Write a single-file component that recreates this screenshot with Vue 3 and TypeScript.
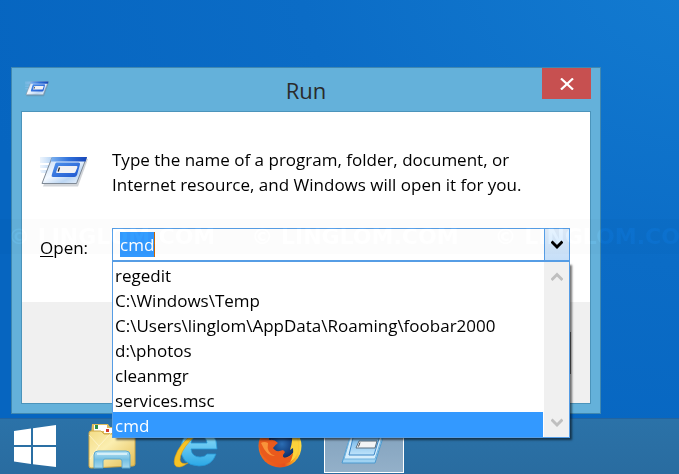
<script setup lang="ts">
import { ref } from 'vue'

const command = ref<string>('cmd')
const history: string[] = [
  'regedit',
  'C:\\Windows\\Temp',
  'C:\\Users\\linglom\\AppData\\Roaming\\foobar2000',
  'd:\\photos',
  'cleanmgr',
  'services.msc',
  'cmd',
]
const selected = ref<number>(6)

function choose(index: number): void {
  selected.value = index
  command.value = history[index]
}
</script>

<template>
  <div class="desktop">
    <main class="workspace">
      <section class="window" aria-labelledby="run-title">
        <header class="titlebar">
          <svg class="title-icon" viewBox="0 0 48 32" aria-hidden="true">
            <use href="#run-glyph" />
          </svg>
          <h1 id="run-title">Run</h1>
          <button class="close" type="button" aria-label="Close">
            <svg width="14" height="12" viewBox="0 0 14 12" aria-hidden="true">
              <path d="M1 0.5 13 11.5M13 0.5 1 11.5" stroke="#fff" stroke-width="2.2" />
            </svg>
          </button>
        </header>

        <div class="client">
          <div class="body">
            <svg class="run-icon" viewBox="0 0 48 32" aria-hidden="true">
              <defs>
                <linearGradient id="face" x1="0" y1="0" x2="1" y2="1">
                  <stop offset="0" stop-color="#b9d6f6" />
                  <stop offset="0.45" stop-color="#f4f9ff" />
                  <stop offset="0.7" stop-color="#bcd6f3" />
                  <stop offset="1" stop-color="#f2f7fd" />
                </linearGradient>
                <linearGradient id="bar" x1="0" y1="0" x2="1" y2="0">
                  <stop offset="0" stop-color="#7fb4f0" />
                  <stop offset="0.5" stop-color="#2f71dc" />
                  <stop offset="1" stop-color="#1746b8" />
                </linearGradient>
                <linearGradient id="frame" x1="0" y1="0" x2="1" y2="1">
                  <stop offset="0" stop-color="#4d92ec" />
                  <stop offset="1" stop-color="#1f57cf" />
                </linearGradient>
                <linearGradient id="trail" x1="0" y1="0" x2="1" y2="0">
                  <stop offset="0" stop-color="#a9cdf4" stop-opacity="0.3" />
                  <stop offset="1" stop-color="#8dbcf0" />
                </linearGradient>
                <g id="run-glyph">
                  <path d="M0 1H13L11 7H0ZM0 9H10L9 12H0ZM0 14H8L7 17H1Z" fill="url(#trail)" opacity="0.7" />
                  <path d="M13 3H48L38 30.500H3Z" fill="#6b7480" opacity="0.3" />
                  <path d="M12 1.500H46.500L36.500 27.500H2Z" fill="url(#face)" stroke="#7f8995" stroke-width="1" />
                  <path d="M12 1H47L45.500 5.500H10.500Z" fill="url(#bar)" />
                  <path d="M16.500 6.500H38.500Q40.500 6.500 40 8.500L37 19Q36.300 21 34.300 21H13Q11 21 11.700 19L15 8.500Q15.500 6.500 16.500 6.500Z" fill="url(#frame)" />
                  <path d="M19 10H36.500Q37.700 10 37.400 11.200L35.600 15.800Q35.200 17 34 17H17Q15.800 17 16.200 15.800L17.900 11.200Q18.200 10 19 10Z" fill="#f1f2f5" />
                  <path d="M19.500 11.500 18.200 15.500" stroke="#222" stroke-width="1.300" />
                </g>
              </defs>
              <use href="#run-glyph" />
            </svg>
            <p class="message">
              Type the name of a program, folder, document, or<br />
              Internet resource, and Windows will open it for you.
            </p>

            <label class="open-label" for="command"><u>O</u>pen:</label>
            <div class="combo">
              <div class="field">
                <input id="command" v-model="command" type="text" size="3" autocomplete="off" spellcheck="false" />
              </div>
              <button class="arrow" type="button" aria-label="Show recent commands">
                <svg width="12" height="10" viewBox="0 0 12 10" aria-hidden="true">
                  <path d="M0.500 1.500 6 7 11.500 1.500" fill="none" stroke="#000" stroke-width="3" />
                </svg>
              </button>
              <div class="dropdown">
                <ul class="options" role="listbox" aria-label="Recent commands">
                  <li
                    v-for="(item, i) in history"
                    :key="item"
                    role="option"
                    :aria-selected="i === selected"
                    :class="{ active: i === selected }"
                    @click="choose(i)"
                  >{{ item }}</li>
                </ul>
                <div class="scroll">
                  <button type="button" aria-label="Scroll up">
                    <svg width="12" height="10" viewBox="0 0 12 10" aria-hidden="true">
                      <path d="M0.500 8 6 2.500 11.500 8" fill="none" stroke="#bfbfbf" stroke-width="3" />
                    </svg>
                  </button>
                  <button type="button" aria-label="Scroll down">
                    <svg width="12" height="10" viewBox="0 0 12 10" aria-hidden="true">
                      <path d="M0.500 1.500 6 7 11.500 1.500" fill="none" stroke="#bfbfbf" stroke-width="3" />
                    </svg>
                  </button>
                </div>
              </div>
            </div>
          </div>
          <footer class="actions"><span class="action-edge"></span></footer>
        </div>
      </section>
    </main>

    <nav class="taskbar" aria-label="Taskbar">
      <button class="task start" type="button" aria-label="Start">
        <svg width="42" height="42" viewBox="0 0 42 42" aria-hidden="true">
          <path d="M0 6 17 3.500V20H0ZM19 3.200 42 0V20H19ZM0 22H17V39L0 36.500ZM19 22H42V42L19 39.200Z" fill="#fff" />
        </svg>
      </button>
      <button class="task" type="button" aria-label="File Explorer">
        <svg width="48" height="46" viewBox="0 0 48 46" aria-hidden="true">
          <defs>
            <linearGradient id="folder" x1="0" y1="0" x2="1" y2="1">
              <stop offset="0" stop-color="#f3dc86" />
              <stop offset="0.4" stop-color="#fbeeb0" />
              <stop offset="1" stop-color="#e3bd53" />
            </linearGradient>
            <linearGradient id="stand" x1="0" y1="0" x2="0" y2="1">
              <stop offset="0" stop-color="#b9e4f4" />
              <stop offset="0.5" stop-color="#74bfe2" />
              <stop offset="1" stop-color="#a6d9ee" />
            </linearGradient>
          </defs>
          <path d="M4 1H20L22 4H40V12H3Z" fill="#dfbd5c" />
          <path d="M6 2H19V8H6Z" fill="#fff" />
          <path d="M7 2H10V6H7Z" fill="#2f8f4a" />
          <path d="M16 5H38V10H16Z" fill="#fff" />
          <path d="M18 6H21V9H18Z" fill="#d33a2b" />
          <path d="M1 10Q1 8 3 8H13L16 11H45Q47 11 47 14V41Q47 43 45 43L3 45Q1 45 1 43Z" fill="url(#folder)" stroke="#cfa846" />
          <path d="M11 23 1 12M11 23 23 10M11 23 2 36" stroke="#fffbe0" stroke-width="1" opacity="0.6" />
          <path d="M6 45V32Q6 28 10 28H38Q42 28 42 32V45H34V38Q34 36 32 36H17Q15 36 15 38V45Z" fill="url(#stand)" stroke="#5ca8cf" />
          <path d="M9 31H39" stroke="#e3f6fc" stroke-width="2" opacity="0.8" />
        </svg>
      </button>
      <button class="task" type="button" aria-label="Internet Explorer">
        <svg width="46" height="44" viewBox="0 0 46 44" aria-hidden="true">
          <defs>
            <linearGradient id="ie" x1="0" y1="0" x2="0" y2="1">
              <stop offset="0" stop-color="#9be3fb" />
              <stop offset="1" stop-color="#2ba8e6" />
            </linearGradient>
          </defs>
          <path d="M44 25H18Q19 33 27 33Q32 33 34 30H43Q39 42 26 42Q7 41 8 23Q10 5 27 5Q44 6 44 25ZM18 19H34Q33 12 26 12Q19 12 18 19Z" fill="url(#ie)" stroke="#2496d4" stroke-width="0.800" />
          <path d="M41 4Q34-1 21 9Q6 20 2 33Q-1 44 7 43Q11 42 15 39Q8 41 7 36Q7 28 17 17Q28 5 41 4Z" fill="#f6c326" stroke="#d99a16" stroke-width="0.600" />
        </svg>
      </button>
      <button class="task" type="button" aria-label="Firefox">
        <svg width="44" height="44" viewBox="0 0 44 44" aria-hidden="true">
          <defs>
            <linearGradient id="fox" x1="0" y1="0" x2="1" y2="0">
              <stop offset="0" stop-color="#f26a1d" />
              <stop offset="0.6" stop-color="#e8501c" />
              <stop offset="0.8" stop-color="#f7a11d" />
              <stop offset="1" stop-color="#fde047" />
            </linearGradient>
            <radialGradient id="globe">
              <stop offset="0" stop-color="#2b6db3" />
              <stop offset="1" stop-color="#0c2f6b" />
            </radialGradient>
          </defs>
          <circle cx="22" cy="22" r="21.500" fill="url(#fox)" />
          <circle cx="24" cy="20" r="14" fill="url(#globe)" />
          <path d="M1 17Q6 12 12 16Q16 15 20 19Q17 21 15 24Q18 29 25 26L27 28Q22 34 29 34Q35 31 38 24Q40 32 34 37Q23 43 11 37Q0 30 1 17Z" fill="#ea5a1c" />
          <path d="M3 19Q6 17 10 19Q8 29 17 32Q9 33 3 19Z" fill="#f9933a" />
          <path d="M34 7Q42 15 40 27Q38 35 32 38Q36 31 35 24L32 26Q35 17 34 7Z" fill="#fbd23b" />
        </svg>
      </button>
      <button class="task running" type="button" aria-label="Run">
        <svg width="46" height="40" viewBox="0 0 46 40" aria-hidden="true">
          <defs>
            <linearGradient id="pane" x1="0" y1="0" x2="0" y2="1">
              <stop offset="0" stop-color="#4f9ddc" />
              <stop offset="1" stop-color="#bfe4fb" />
            </linearGradient>
          </defs>
          <path d="M12 2H45L34 37H1Z" fill="#9fd2f2" stroke="#4c9ad0" />
          <path d="M12 2H44L34 33H3Z" fill="#d5edfb" stroke="#6fb1de" />
          <path d="M14 3H41L33 29H8Z" fill="url(#pane)" stroke="#3d86c6" />
          <path d="M18 15H36L34 22H15Z" fill="#f2f4f6" stroke="#5a6f80" />
          <path d="M19 16.500 17.500 20.500" stroke="#444" />
        </svg>
      </button>
    </nav>

    <div class="watermark" aria-hidden="true">
      <span>© LINGLOM.COM</span>
      <span>© LINGLOM.COM</span>
      <span>© LINGLOM.COM</span>
    </div>
  </div>
</template>

<style>
body {
  margin: 0;
}
</style>

<style scoped>
.desktop {
  position: relative;
  display: flex;
  flex-direction: column;
  min-height: 100vh;
  overflow: hidden;
  box-sizing: border-box;
  background: radial-gradient(ellipse at 108% -8%, #147dd2 0%, #0b6cc6 42%, #0665c0 75%);
  color: #000;
  font-family: "Open Sans", "Noto Sans", sans-serif;
  font-size: 17px;
  line-height: 25px;
}

button {
  margin: 0;
  padding: 0;
  border: 0;
  background: none;
  font: inherit;
}

svg {
  display: block;
}

.workspace {
  flex: 1;
  display: flex;
  padding: 67px 78px 4px 11px;
}

.window {
  flex: 1;
  display: flex;
  flex-direction: column;
  min-width: 0;
  padding: 0 9px 9px;
  border: 1px solid #4088b0;
  background: #64b1da;
}

.titlebar {
  display: grid;
  grid-template-columns: 49px 1fr 49px;
  align-items: start;
  height: 43px;
}

.title-icon {
  width: 24px;
  height: 16px;
  margin: 13px 0 0 4px;
}

h1 {
  margin: 0;
  padding-top: 6px;
  color: #2a2a2a;
  font-size: 22px;
  font-weight: 400;
  line-height: 32px;
  text-align: center;
}

.close {
  display: grid;
  place-items: center;
  height: 31px;
  background: #c75050;
}

.client {
  flex: 1;
  display: flex;
  flex-direction: column;
  border: 1px solid #4b94bb;
  background: #fff;
}

.body {
  flex: 1;
  display: grid;
  grid-template-columns: 72px 1fr;
  align-content: start;
  align-items: center;
  row-gap: 31px;
  padding: 35px 20px 0 18px;
}

.run-icon {
  width: 48px;
  height: 32px;
}

.message {
  margin: 0;
  white-space: nowrap;
}

.open-label {
  padding-top: 6px;
}

.open-label u {
  text-underline-offset: 2px;
}

.combo {
  position: relative;
  display: flex;
  height: 33px;
  box-sizing: border-box;
  border: 1px solid #569de5;
}

.field {
  flex: 1;
  display: flex;
  align-items: center;
  padding: 0 7px 1px;
}

.field input {
  field-sizing: content;
  height: 25px;
  box-sizing: border-box;
  padding: 1px 0 0;
  border: 0;
  border-right: 1px solid #cc6600;
  outline: 0;
  background: #3399ff;
  color: #fff;
  font: inherit;
}

.arrow {
  display: grid;
  place-items: center;
  width: 25px;
  border-left: 1px solid #569de5;
  background: linear-gradient(#deebf9, #c6dff8);
}

.dropdown {
  position: absolute;
  top: 32px;
  left: -1px;
  right: -1px;
  z-index: 2;
  display: flex;
  border: 1px solid #569de5;
  background: #fff;
  box-shadow: 3px 3px 2px -1px rgba(0, 0, 0, 0.55);
}

.options {
  flex: 1;
  margin: 0;
  padding: 0;
  list-style: none;
}

.options li {
  height: 25px;
  box-sizing: border-box;
  padding: 1px 0 0 2px;
  white-space: nowrap;
}

.options .active {
  background: #3399ff;
  color: #fff;
}

.scroll {
  display: flex;
  flex-direction: column;
  justify-content: space-between;
  width: 25px;
  margin-left: 1px;
  background: #f0f0f0;
}

.scroll button {
  display: grid;
  place-items: center;
  height: 29px;
}

.actions {
  display: flex;
  justify-content: flex-end;
  height: 101px;
  box-sizing: border-box;
  padding: 30px 19px 0 0;
  background: #f0f0f0;
}

.action-edge {
  width: 1px;
  height: 42px;
  background: #707070;
}

.taskbar {
  display: flex;
  align-items: flex-start;
  height: 56px;
  box-sizing: border-box;
  padding: 0 0 0 14px;
  border-top: 1px solid #2264a0;
  background: linear-gradient(#2b72a8, #296ca0);
}

.task {
  display: grid;
  place-items: center;
  width: 80px;
  height: 54px;
  margin-right: 4px;
}

.start {
  width: 42px;
  margin-right: 16px;
}

.running {
  box-sizing: border-box;
  border: 1px solid #fff;
  background: linear-gradient(#7f9fbb, #93b0c9);
}

.watermark {
  position: absolute;
  top: 219px;
  left: 0;
  right: 0;
  display: flex;
  gap: 36px;
  height: 35px;
  padding-left: 8px;
  overflow: hidden;
  background: rgba(0, 0, 0, 0.012);
  color: #0c0c0c;
  font: bold 22px/36px "DejaVu Sans", sans-serif;
  white-space: nowrap;
  pointer-events: none;
}

.watermark span {
  mix-blend-mode: color-dodge;
}
</style>
